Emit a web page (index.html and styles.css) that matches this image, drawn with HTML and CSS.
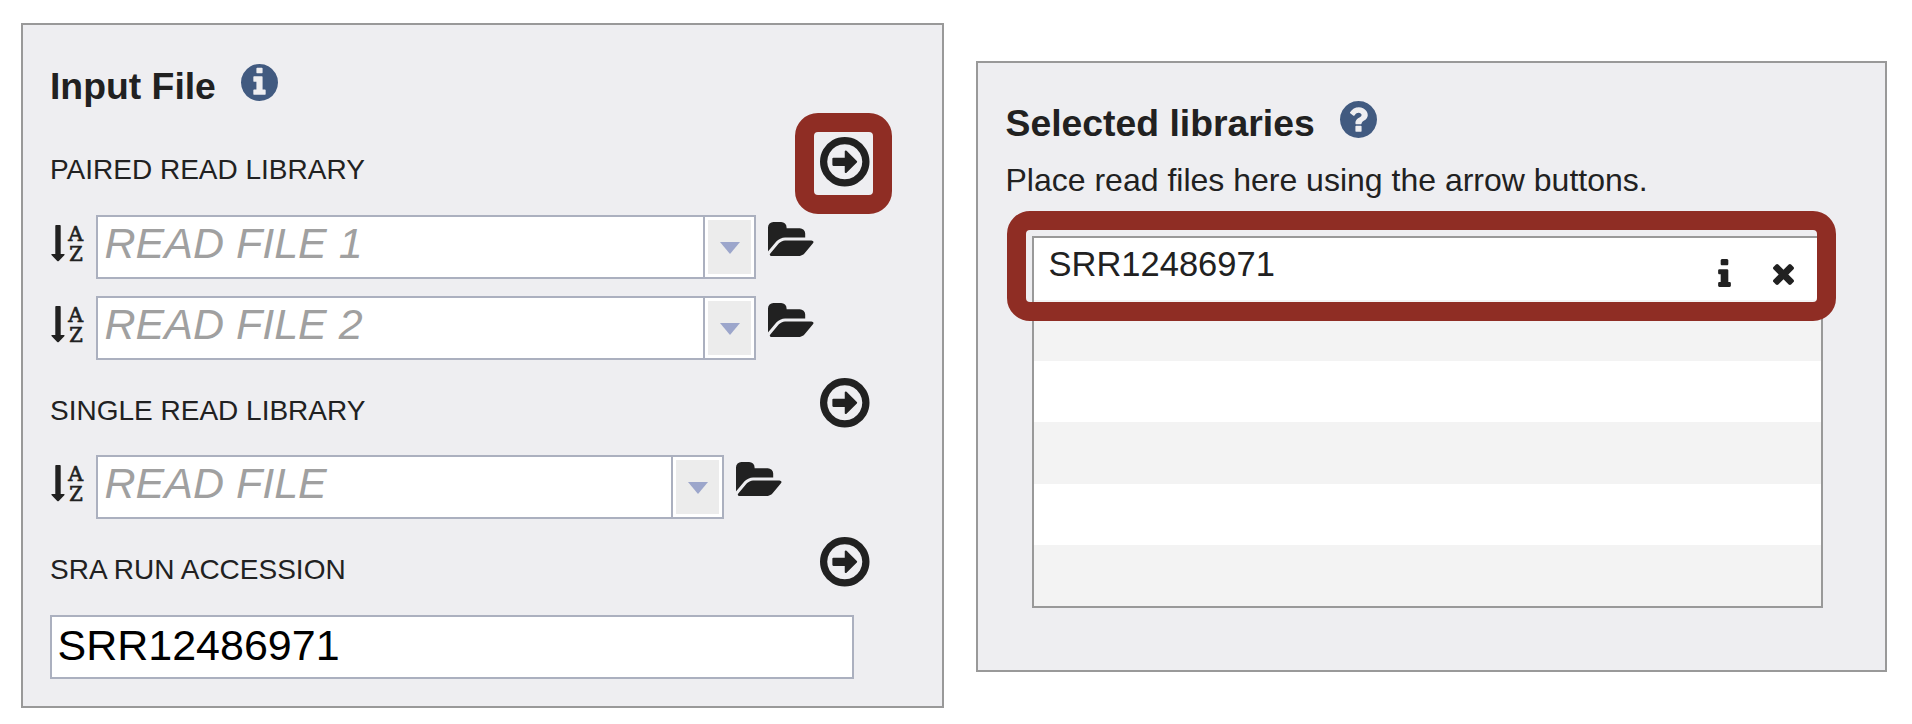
FILE: index.html
```html
<!DOCTYPE html>
<html lang="en">
<head>
<meta charset="utf-8">
<title>Read input</title>
<link rel="stylesheet" href="styles.css">
</head>
<body>
<svg class="sprite" aria-hidden="true">
  <symbol id="add" viewBox="0 128 1536 1536"><path d="M1152 896q0 14-9 23l-320 320q-9 9-23 9-13 0-22.500-9.500t-9.500-22.500v-192h-352q-13 0-22.500-9.500t-9.500-22.500v-192q0-13 9.500-22.500t22.500-9.500h352v-192q0-14 9-23t23-9q12 0 24 10l319 319q9 9 9 23zm160 0q0-148-73-273t-198-198-273-73-273 73-198 198-73 273 73 273 198 198 273 73 273-73 198-198 73-273zm224 0q0 209-103 385.500t-279.500 279.500-385.500 103-385.500-103-279.500-279.500-103-385.500 103-385.500 279.500-279.500 385.500-103 385.500 103 279.500 279.500 103 385.500z"/></symbol>
  <symbol id="folder" viewBox="0 128 1879 1408"><path d="M1879 952q0 31-31 66l-336 396q-43 51-120.500 86.500t-143.500 35.500h-1088q-34 0-60.500-13t-26.500-43q0-31 31-66l336-396q43-51 120.500-86.500t143.500-35.500h1088q34 0 60.500 13t26.500 43zm-343-344v160h-832q-94 0-197 47.500t-164 119.500l-337 396-5 6q0-4-.5-12.500t-.5-12.500v-960q0-92 66-158t158-66h320q92 0 158 66t66 158v32h544q92 0 158 66t66 158z"/></symbol>
</svg>
<main class="page">
  <section class="panel panel-input">
    <h2 class="title">Input File
      <svg class="title-icon" viewBox="0 128 1536 1536"><path d="M1024 1376v-160q0-14-9-23t-23-9h-96v-512q0-14-9-23t-23-9h-320q-14 0-23 9t-9 23v160q0 14 9 23t23 9h96v320h-96q-14 0-23 9t-9 23v160q0 14 9 23t23 9h448q14 0 23-9t9-23zm-128-896v-160q0-14-9-23t-23-9h-192q-14 0-23 9t-9 23v160q0 14 9 23t23 9h192q14 0 23-9t9-23zm640 416q0 209-103 385.500t-279.500 279.500-385.500 103-385.500-103-279.500-279.500-103-385.500 103-385.500 279.500-279.500 385.500-103 385.500 103 279.500 279.500 103 385.500z"/></svg>
    </h2>
    <div class="group group-first">
      <span class="label">PAIRED READ LIBRARY</span>
      <span class="add-wrap"><svg class="add"><use href="#add"/></svg><span class="highlight highlight-add"></span></span>
    </div>
    <div class="field">
      <svg class="sort" viewBox="0 0 33 38"><path d="M4.300.8q0-.8.800-.8h3.800q.8 0 .8.800V29h3.300q1.200.2.300 1.300L7.800 36q-.8.700-1.600 0L.7 30.300Q-.3 29.200.9 29H4.300z"/><text x="24.700" y="15.700" class="sort-letter" textLength="14.800" lengthAdjust="spacingAndGlyphs">A</text><text x="24.900" y="36" class="sort-letter" textLength="13.500" lengthAdjust="spacingAndGlyphs">Z</text></svg>
      <div class="combo"><span class="placeholder">READ FILE 1</span><span class="drop"><svg class="caret" viewBox="0 0 20 12"><path d="M0 0h20L10 12z"/></svg></span></div>
      <svg class="folder"><use href="#folder"/></svg>
    </div>
    <div class="field">
      <svg class="sort" viewBox="0 0 33 38"><path d="M4.300.8q0-.8.800-.8h3.800q.8 0 .8.800V29h3.300q1.200.2.300 1.300L7.800 36q-.8.700-1.600 0L.7 30.300Q-.3 29.200.9 29H4.300z"/><text x="24.700" y="15.700" class="sort-letter" textLength="14.800" lengthAdjust="spacingAndGlyphs">A</text><text x="24.900" y="36" class="sort-letter" textLength="13.500" lengthAdjust="spacingAndGlyphs">Z</text></svg>
      <div class="combo"><span class="placeholder">READ FILE 2</span><span class="drop"><svg class="caret" viewBox="0 0 20 12"><path d="M0 0h20L10 12z"/></svg></span></div>
      <svg class="folder"><use href="#folder"/></svg>
    </div>
    <div class="group">
      <span class="label">SINGLE READ LIBRARY</span>
      <svg class="add"><use href="#add"/></svg>
    </div>
    <div class="field">
      <svg class="sort" viewBox="0 0 33 38"><path d="M4.300.8q0-.8.800-.8h3.800q.8 0 .8.800V29h3.300q1.200.2.300 1.300L7.800 36q-.8.700-1.600 0L.7 30.300Q-.3 29.200.9 29H4.300z"/><text x="24.700" y="15.700" class="sort-letter" textLength="14.800" lengthAdjust="spacingAndGlyphs">A</text><text x="24.900" y="36" class="sort-letter" textLength="13.500" lengthAdjust="spacingAndGlyphs">Z</text></svg>
      <div class="combo combo-short"><span class="placeholder">READ FILE</span><span class="drop"><svg class="caret" viewBox="0 0 20 12"><path d="M0 0h20L10 12z"/></svg></span></div>
      <svg class="folder folder-short"><use href="#folder"/></svg>
    </div>
    <div class="group">
      <span class="label">SRA RUN ACCESSION</span>
      <svg class="add"><use href="#add"/></svg>
    </div>
    <div class="accession">SRR12486971</div>
  </section>

  <section class="panel panel-selected">
    <h2 class="title">Selected libraries
      <svg class="title-icon" viewBox="0 128 1536 1536"><path d="M896 1376v-192q0-14-9-23t-23-9h-192q-14 0-23 9t-9 23v192q0 14 9 23t23 9h192q14 0 23-9t9-23zm256-672q0-88-55.500-163t-138.500-116-170-41q-243 0-371 213-15 24 8 42l132 100q7 6 19 6 16 0 25-12 53-68 86-92 34-24 86-24 48 0 85.500 26t37.500 59q0 38-20 61t-68 45q-63 28-115.500 86.500t-52.500 125.500v36q0 14 9 23t23 9h192q14 0 23-9t9-23q0-19 21.500-49.500t54.500-49.500q32-18 49-28.500t46-35 44.500-48 28-60.500 12.500-81zm384 192q0 209-103 385.500t-279.500 279.500-385.500 103-385.500-103-279.500-279.500-103-385.500 103-385.500 279.500-279.500 385.500-103 385.500 103 279.500 279.500 103 385.500z"/></svg>
    </h2>
    <p class="hint">Place read files here using the arrow buttons.</p>
    <div class="list">
      <div class="row">
        <span class="row-name">SRR12486971</span>
        <svg class="info" viewBox="0 128 640 1408"><path d="M640 1344v128q0 26-19 45t-45 19h-512q-26 0-45-19t-19-45v-128q0-26 19-45t45-19h64v-384h-64q-26 0-45-19t-19-45v-128q0-26 19-45t45-19h384q26 0 45 19t19 45v576h64q26 0 45 19t19 45zm-128-1152v192q0 26-19 45t-45 19h-256q-26 0-45-19t-19-45v-192q0-26 19-45t45-19h256q26 0 45 19t19 45z"/></svg>
        <svg class="remove" viewBox="110 366 1188 1188"><path d="M1298 1322q0 40-28 68l-136 136q-28 28-68 28t-68-28l-294-294-294 294q-28 28-68 28t-68-28l-136-136q-28-28-28-68t28-68l294-294-294-294q-28-28-28-68t28-68l136-136q28-28 68-28t68 28l294 294 294-294q28-28 68-28t68 28l136 136q28 28 28 68t-28 68l-294 294 294 294q28 28 28 68z"/></svg>
      </div>
      <div class="row"></div>
      <div class="row"></div>
      <div class="row"></div>
      <div class="row"></div>
      <div class="row"></div>
      <span class="highlight highlight-row"></span>
    </div>
  </section>
</main>
</body>
</html>
```

FILE: styles.css
```css
* {
  box-sizing: border-box;
}

body {
  margin: 0;
  background: #fff;
  color: #212121;
  font-family: "Liberation Sans", Arial, sans-serif;
}

svg {
  display: block;
  flex: none;
  overflow: visible;
  fill: #212121;
}

symbol {
  overflow: visible;
}

.sprite {
  position: absolute;
  width: 0;
  height: 0;
}

.page {
  display: flex;
  align-items: flex-start;
  gap: 32px;
  padding: 23px 0 0 21px;
}

.panel {
  border: 2px solid #999;
  background: #eeeef1;
}

.panel-input {
  width: 923px;
  height: 685px;
  padding: 35px 0 0 27px;
}

.panel-selected {
  width: 911px;
  height: 611px;
  margin-top: 38px;
  padding: 34px 0 0 27.5px;
}

.title {
  display: flex;
  align-items: center;
  gap: 25.5px;
  height: 52px;
  margin: 0;
  font-size: 37.33px;
  font-weight: bold;
  line-height: 51px;
}

.title-icon {
  width: 37px;
  height: 37px;
  margin-bottom: 6.5px;
  fill: #415a80;
}

.group {
  display: flex;
  justify-content: space-between;
  width: 819px;
  height: 50px;
  margin: 18px 0 27px;
}

.group-first {
  margin-top: 25px;
  margin-bottom: 28px;
}

.label {
  padding-top: 16px;
  font-size: 28px;
  line-height: 33px;
}

.add-wrap {
  position: relative;
}

.add {
  width: 49.5px;
  height: 49.5px;
}

.field {
  display: flex;
  align-items: flex-start;
}

.field + .field {
  margin-top: 17px;
}

.sort {
  width: 33px;
  height: 38px;
  margin: 10px 12.5px 0 0.5px;
}

.sort-letter {
  font-family: "DejaVu Serif", serif;
  font-size: 20px;
  text-anchor: middle;
  stroke: #212121;
  stroke-width: 0.7px;
}

.combo {
  display: flex;
  width: 660px;
  height: 64px;
  border: 2px solid #abb0bf;
  background: #fff;
}

.combo-short {
  width: 628px;
}

.placeholder {
  flex: 1;
  padding-left: 6.5px;
  color: #a0a0a0;
  font-size: 43px;
  font-style: italic;
  line-height: 53px;
}

.drop {
  display: flex;
  justify-content: center;
  width: 49px;
  padding-top: 22px;
  border: 3px solid #fff;
  background: #ececec;
  outline: 2px solid #abb0bf;
}

.caret {
  width: 20px;
  height: 12px;
  fill: #9ca6cb;
}

.folder {
  width: 45.5px;
  height: 34.1px;
  margin: 6.5px 0 0 12px;
}

.folder-short {
  margin-left: 11.5px;
}

.accession {
  width: 804px;
  height: 64px;
  margin: 28px 0 0;
  padding-left: 5.5px;
  border: 2px solid #abb0bf;
  background: #fff;
  color: #000;
  font-size: 43px;
  line-height: 57px;
}

.hint {
  margin: 13px 0 38px;
  font-size: 32px;
  line-height: 36px;
}

.list {
  position: relative;
  display: grid;
  grid-template-rows: 62px repeat(5, 1fr);
  width: 791px;
  height: 372px;
  margin-left: 26.5px;
  border: 2px solid #999;
  background: #fff;
}

.row {
  display: flex;
  align-items: flex-start;
  padding: 0 27.5px 0 14.5px;
}

.row:nth-child(even) {
  background: #f3f3f3;
}

.row-name {
  flex: 1;
  font-size: 34.5px;
  line-height: 52px;
}

.info {
  width: 13px;
  height: 28px;
  margin-top: 21px;
}

.remove {
  width: 21px;
  height: 21px;
  margin: 25.5px 0 0 42px;
}

.highlight {
  position: absolute;
  border: 19px solid #8f2d24;
  border-radius: 23px;
}

.highlight-add {
  top: -24px;
  left: -24.5px;
  width: 97px;
  height: 101px;
}

.highlight-row {
  top: -27px;
  left: -27px;
  width: 829px;
  height: 110px;
}
```
